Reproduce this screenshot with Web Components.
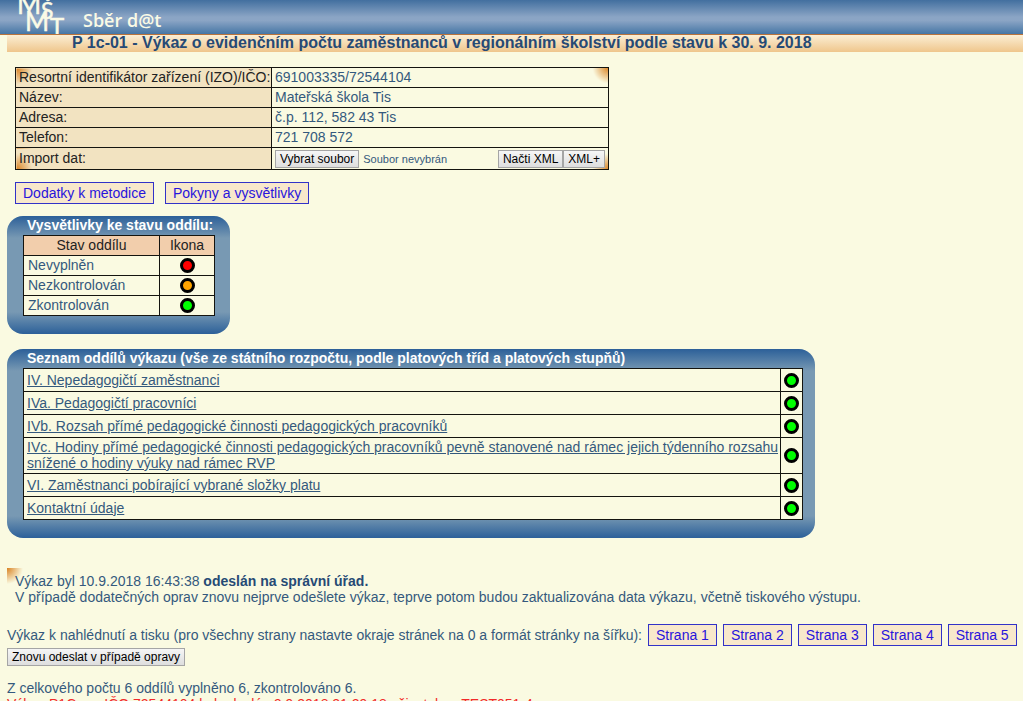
<!DOCTYPE html>
<html lang="cs">
<head>
<meta charset="utf-8">
<meta name="viewport" content="width=device-width, initial-scale=1">
<title>Sběr d@t</title>
<style>
  html { background: #fafae1; }
  body { margin: 0; font: 14px/16px "Liberation Sans", Arial, sans-serif; color: #34597d; }
</style>
</head>
<body>
<report-page></report-page>

<script>
const define = (name, html, setup) => {
  const template = document.createElement('template');
  template.innerHTML = html;
  customElements.define(name, class extends HTMLElement {
    constructor() {
      super();
      this.attachShadow({ mode: 'open' }).append(template.content.cloneNode(true));
    }
    connectedCallback() { if (setup) setup(this, this.shadowRoot); }
  });
};

define('app-header', `
<style>
  :host { display: flex; align-items: flex-start; height: 34px; overflow: hidden; padding-left: 16px;
    border-bottom: 1px solid #b9733c;
    background: linear-gradient(#426f9f, #8ba5c5 50%, #8ba5c5 60%, #4676a5); color: #fafae6; }
  svg { width: 60px; height: 34px; flex: none; font-family: Lato, "Open Sans", sans-serif; fill: #fafae6; stroke: #fafae6; stroke-width: 0.5; }
  .name { margin-left: 7px; padding-top: 8px; font: 600 18px/24px "Open Sans", sans-serif; }
</style>
<svg viewBox="0 0 60 34" role="img" aria-label="MŠMT">
  <text x="1" y="14" font-size="26">M</text><text x="25" y="19" font-size="23">Š</text>
  <text x="9" y="31" font-size="26">M</text><text x="34" y="35" font-size="24">T</text>
</svg>
<span class="name"><slot></slot></span>`);

define('page-title', `
<style>
  :host { display: block; margin-left: 7px; padding-left: 65px; height: 17px;
    background: linear-gradient(#fbeed4, #efc68c); color: #264a75; }
  h1 { margin: 0; font-size: 16px; line-height: 15px; }
</style>
<h1><slot></slot></h1>`);

define('status-dot', `
<style>
  :host { display: inline-block; width: 15px; height: 15px; vertical-align: middle; }
  svg { display: block; }
  :host([state=empty]) { color: #f00; }
  :host([state=unchecked]) { color: #ffa500; }
  :host([state=checked]) { color: #0f0; }
</style>
<svg viewBox="0 0 15 15" width="15" height="15" aria-hidden="true"><circle cx="7.5" cy="7.5" r="6" fill="currentColor" stroke="#000" stroke-width="3"/></svg>`);

define('box-link', `
<style>
  :host { display: inline-block; }
  a { display: block; padding: 2px 7px; border: 1px solid #3232c8; background: #f8e8cb; color: #2814dc;
    line-height: 16px; text-decoration: none; white-space: nowrap; }
</style>
<a href="#"><slot></slot></a>`);

define('push-button', `
<style>
  :host { display: inline-block; }
  button { display: block; height: 18px; padding: 0 4px; border: 1px solid #a5a5a5; border-radius: 0;
    background: linear-gradient(#f6f6f6, #dedede); color: #000; font: 12px/14px "Liberation Sans", Arial, sans-serif; white-space: nowrap; }
</style>
<button type="button"><slot></slot></button>`);

define('file-picker', `
<style>
  :host { display: flex; align-items: center; gap: 4px; font-size: 11px; }
  input { display: none; }
</style>
<push-button>Vybrat soubor</push-button><input type="file" aria-label="Vybrat soubor"><output>Soubor nevybrán</output>`,
(host, root) => {
  const input = root.querySelector('input');
  root.querySelector('push-button').onclick = () => input.click();
  input.onchange = () => { root.querySelector('output').textContent = input.files[0]?.name ?? 'Soubor nevybrán'; };
});

define('school-info', `
<style>
  :host { display: block; max-width: 594px; }
  table { width: 100%; border-collapse: collapse; 
    background: radial-gradient(circle at 100% 0, #d98222, #fafae100 16px), radial-gradient(circle at 100% 100%, #d98222, #fafae100 16px); }
  th, td { box-sizing: border-box; height: 20px; padding: 0 3px 2px; border: 1px solid #14140f; text-align: left; }
  th { width: 256px; padding-right: 0; background: #f2e3c1; color: #222; font-weight: normal; white-space: nowrap; }
  tr:first-child th { background: radial-gradient(circle at 0 0, #d98222, #f2e3c1 16px); }
  tr:last-child th { background: radial-gradient(circle at 0 100%, #d98222, #f2e3c1 16px); }
  tr:last-child > * { height: 22px; }
  tr:last-child > td { padding-bottom: 0; }
  .import { display: flex; align-items: center; }
  file-picker { flex: 1; }
</style>
<table>
  <tr><th scope="row">Resortní identifikátor zařízení (IZO)/IČO:</th><td>691003335/72544104</td></tr>
  <tr><th scope="row">Název:</th><td>Mateřská škola Tis</td></tr>
  <tr><th scope="row">Adresa:</th><td>č.p. 112, 582 43 Tis</td></tr>
  <tr><th scope="row">Telefon:</th><td>721 708 572</td></tr>
  <tr><th scope="row">Import dat:</th><td><div class="import"><file-picker></file-picker><push-button>Načti XML</push-button><push-button>XML+</push-button></div></td></tr>
</table>`);

define('round-panel', `
<style>
  :host { display: block; box-sizing: border-box; padding: 0 var(--panel-end, 15px) 18px 16px; border-radius: 16px;
    background: linear-gradient(#2c6099, #7899b3 22px, #7899b3 calc(100% - 22px), #2c6099); }
  h2 { margin: 0; padding-left: 4px; font-size: 14px; line-height: 19px; color: #fff; }
</style>
<h2><slot name="title"></slot></h2>
<slot></slot>`);

define('state-legend', `
<style>
  :host { display: block; max-width: 223px; }
  table { width: 100%; border-collapse: collapse; background: #fafae1; }
  th, td { box-sizing: border-box; height: 20px; padding: 0 4px 2px; border: 1px solid #14140f; }
  th { background: #f2ceac; color: #222; font-weight: normal; }
  th:last-child { width: 55px; }
  td:last-child { padding-bottom: 0; text-align: center; line-height: 0; }
</style>
<round-panel>
  <span slot="title">Vysvětlivky ke stavu oddílu:</span>
  <table>
    <tr><th scope="col">Stav oddílu</th><th scope="col">Ikona</th></tr>
    <tr><td>Nevyplněn</td><td><status-dot state="empty"></status-dot></td></tr>
    <tr><td>Nezkontrolován</td><td><status-dot state="unchecked"></status-dot></td></tr>
    <tr><td>Zkontrolován</td><td><status-dot state="checked"></status-dot></td></tr>
  </table>
</round-panel>`);

define('section-list', `
<style>
  :host { display: block; max-width: 808px; --panel-end: 12px; }
  table { width: 100%; border-collapse: collapse; background: #fafae1; }
  td { box-sizing: border-box; height: 23px; padding: 1px 0 2px 3px; border: 1px solid #14140f; }
  td:last-child { width: 22px; padding: 0 3px; line-height: 0; }
  a { color: #34597d; }
</style>
<round-panel>
  <span slot="title">Seznam oddílů výkazu (vše ze státního rozpočtu, podle platových tříd a platových stupňů)</span>
  <table></table>
</round-panel>`,
(host, root) => {
  const table = root.querySelector('table');
  for (const name of [
    'IV. Nepedagogičtí zaměstnanci',
    'IVa. Pedagogičtí pracovníci',
    'IVb. Rozsah přímé pedagogické činnosti pedagogických pracovníků',
    'IVc. Hodiny přímé pedagogické činnosti pedagogických pracovníků pevně stanovené nad rámec jejich týdenního rozsahu snížené o hodiny výuky nad rámec RVP',
    'VI. Zaměstnanci pobírající vybrané složky platu',
    'Kontaktní údaje'
  ]) {
    const row = table.insertRow();
    row.insertCell().innerHTML = `<a href="#">${name}</a>`;
    row.insertCell().innerHTML = '<status-dot state="checked"></status-dot>';
  }
});

define('submission-note', `
<style>
  :host { display: block; padding: 5px 8px 0; background: radial-gradient(circle at 0 0, #d98222, #fafae100 16px) no-repeat; }
  p { margin: 0; }
  strong { color: #264a75; }
</style>
<p>Výkaz byl 10.9.2018 16:43:38 <strong>odeslán na správní úřad.</strong></p>
<p>V případě dodatečných oprav znovu nejprve odešlete výkaz, teprve potom budou zaktualizována data výkazu, včetně tiskového výstupu.</p>`);

define('print-links', `
<style>
  :host { display: flex; flex-wrap: wrap; align-items: center; gap: 2px 6px; }
</style>
<span>Výkaz k nahlédnutí a tisku (pro všechny strany nastavte okraje stránek na 0 a formát stránky na šířku):</span>
<box-link>Strana 1</box-link><box-link>Strana 2</box-link><box-link>Strana 3</box-link><box-link>Strana 4</box-link><box-link>Strana 5</box-link>`);

define('report-page', `
<style>
  :host { display: block; }
  main { padding: 0 0 0 7px; }
  school-info { margin: 15px 0 12px 8px; }
  nav { display: flex; gap: 11px; margin: 0 0 12px 8px; }
  section-list { margin: 15px 0 30px; }
  print-links { margin: 19px 0 2px; }
  p { margin: 0; }
  .summary { margin-top: 14px; }
  .error { color: #f22a2a; }
</style>
<app-header>Sběr d@t</app-header>
<page-title>P 1c-01 - Výkaz o evidenčním počtu zaměstnanců v regionálním školství podle stavu k 30. 9. 2018</page-title>
<main>
  <school-info></school-info>
  <nav><box-link>Dodatky k metodice</box-link><box-link>Pokyny a vysvětlivky</box-link></nav>
  <state-legend></state-legend>
  <section-list></section-list>
  <submission-note></submission-note>
  <print-links></print-links>
  <push-button>Znovu odeslat v případě opravy</push-button>
  <p class="summary">Z celkového počtu 6 oddílů vyplněno 6, zkontrolováno 6.</p>
  <p class="error">Výkaz P1C pro IČO 72544104 byl odeslán 9.9.2018 21:29:18 uživatelem TEST051-4</p>
</main>`);
</script>
</body>
</html>
